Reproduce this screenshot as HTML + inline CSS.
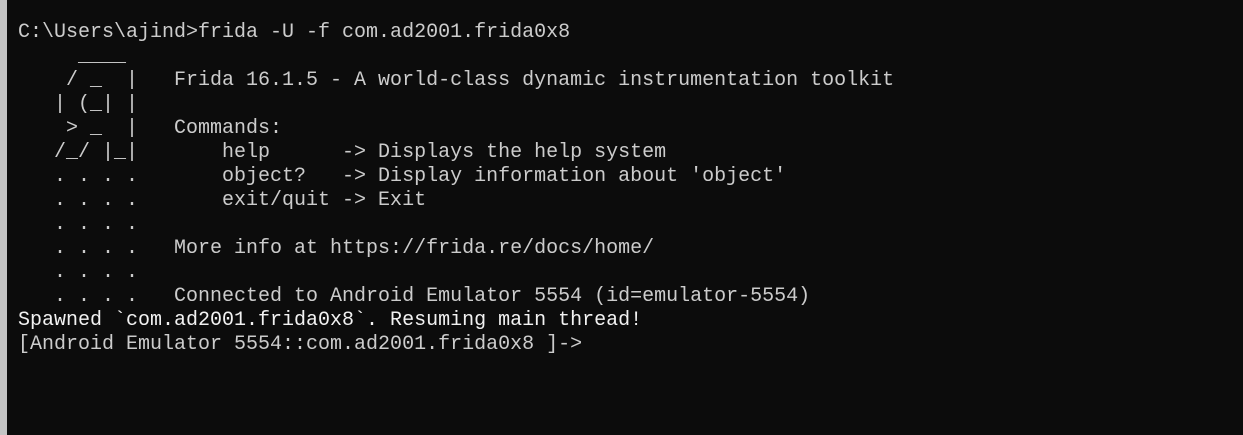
<!DOCTYPE html>
<html><head><style>
html,body{margin:0;padding:0;width:1243px;height:435px;overflow:hidden;background:#0c0c0c}
.b{position:absolute;left:0;top:0;width:7px;height:435px;background:#c4c4c4}
pre{position:absolute;left:18px;top:21px;margin:0;font-family:"Liberation Mono",monospace;font-size:20px;line-height:24px;color:#cccccc;white-space:pre}
.w{color:#f2f2f2}
</style></head><body><div class="b"></div>
<pre>C:\Users\ajind&gt;frida -U -f com.ad2001.frida0x8
     ____
    / _  |   Frida 16.1.5 - A world-class dynamic instrumentation toolkit
   | (_| |
    &gt; _  |   Commands:
   /_/ |_|       help      -&gt; Displays the help system
   . . . .       object?   -&gt; Display information about 'object'
   . . . .       exit/quit -&gt; Exit
   . . . .
   . . . .   More info at https://frida.re/docs/home/
   . . . .
   . . . .   Connected to Android Emulator 5554 (id=emulator-5554)
<span class="w">Spawned `com.ad2001.frida0x8`. Resuming main thread!</span>
[Android Emulator 5554::com.ad2001.frida0x8 ]-&gt;</pre>
</body></html>
